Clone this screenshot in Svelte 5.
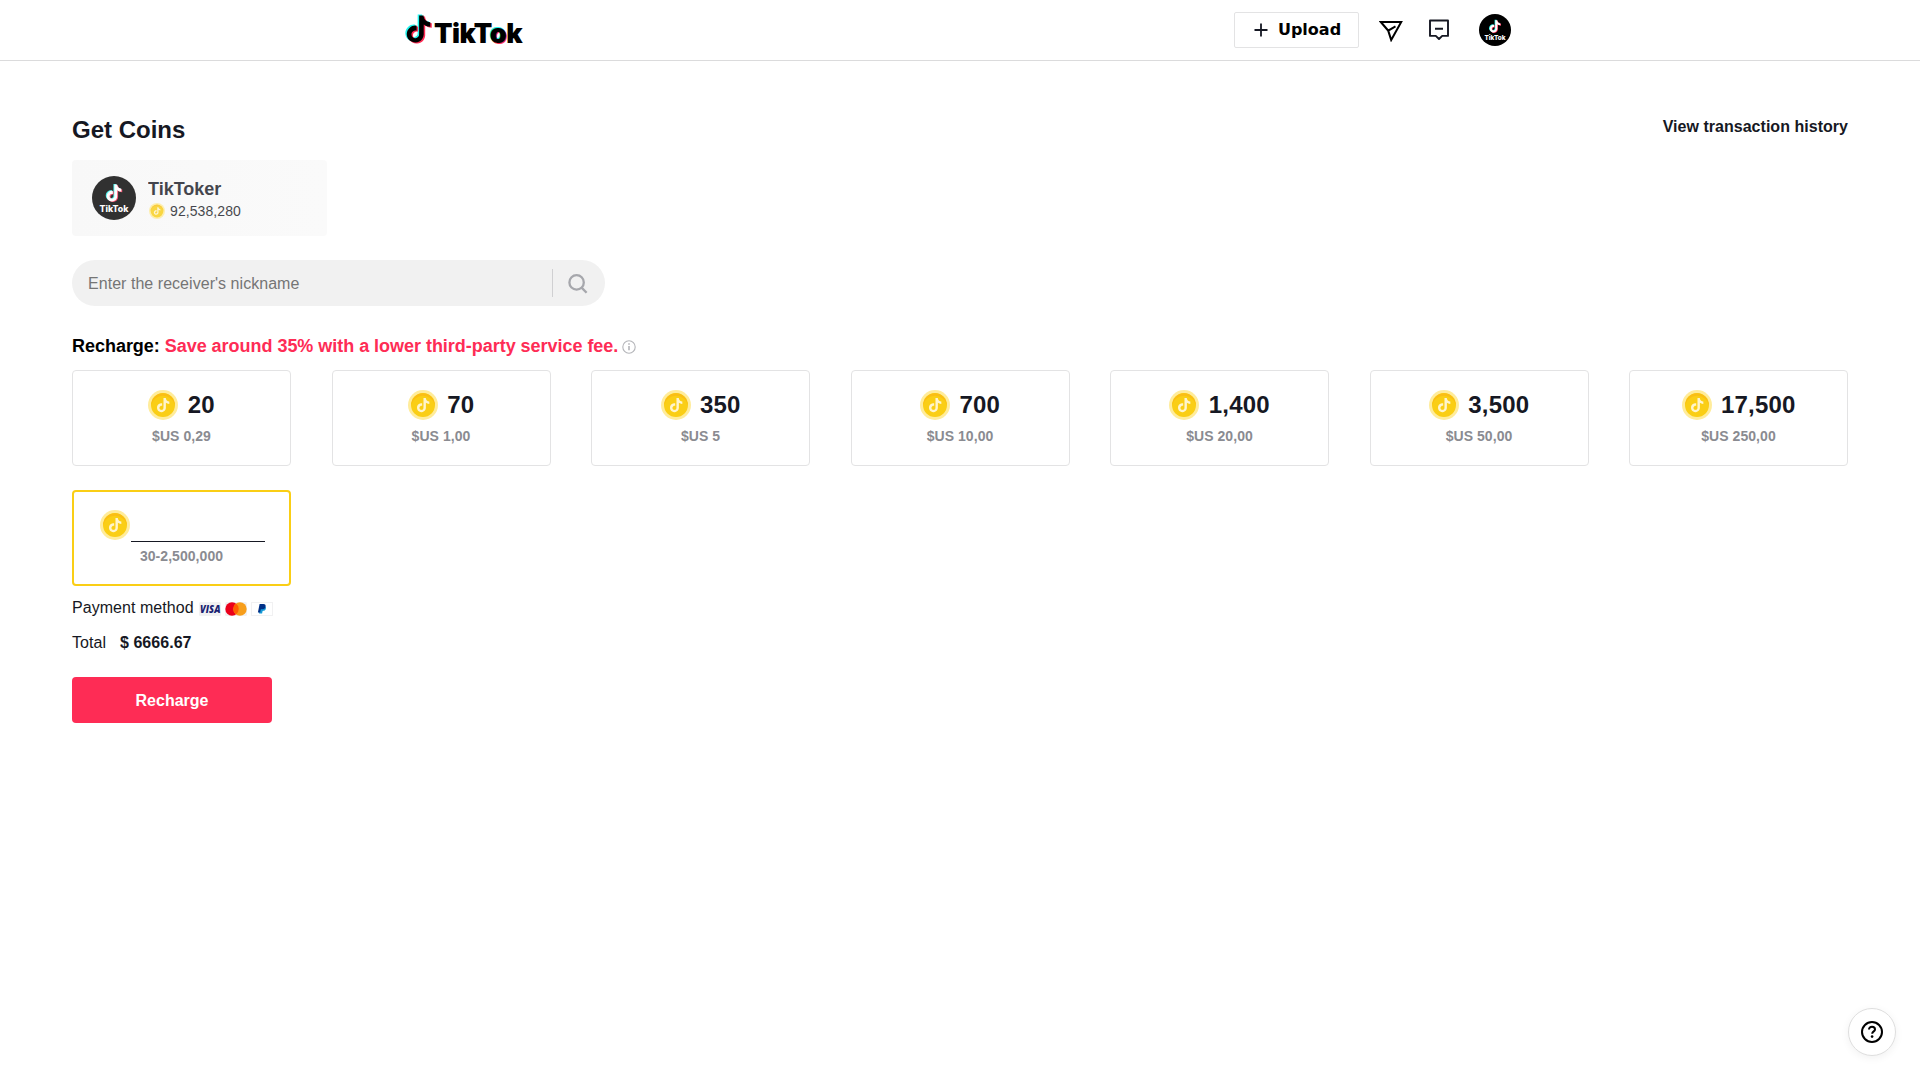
<script lang="ts">
	const notePath =
		'M12.525.02c1.31-.02 2.61-.01 3.91-.02.08 1.53.63 3.09 1.75 4.17 1.12 1.11 2.7 1.62 4.24 1.79v4.03c-1.44-.05-2.89-.35-4.2-.97-.57-.26-1.1-.59-1.62-.93-.01 2.92.01 5.84-.02 8.75-.08 1.4-.54 2.79-1.35 3.94-1.31 1.92-3.58 3.17-5.91 3.21-1.43.08-2.86-.31-4.08-1.03-2.02-1.19-3.44-3.37-3.65-5.71-.02-.5-.03-1-.01-1.49.18-1.9 1.12-3.72 2.58-4.96 1.66-1.44 3.98-2.13 6.15-1.72.02 1.48-.04 2.96-.04 4.44-.99-.32-2.15-.23-3.02.37-.63.41-1.11 1.04-1.36 1.75-.21.51-.15 1.07-.14 1.61.24 1.64 1.82 3.02 3.5 2.87 1.12-.01 2.19-.66 2.77-1.61.19-.33.4-.67.41-1.06.1-1.79.06-3.57.07-5.36.01-4.03-.01-8.05.02-12.07z';

	const packages = [
		{ coins: '20', price: '$US 0,29' },
		{ coins: '70', price: '$US 1,00' },
		{ coins: '350', price: '$US 5' },
		{ coins: '700', price: '$US 10,00' },
		{ coins: '1,400', price: '$US 20,00' },
		{ coins: '3,500', price: '$US 50,00' },
		{ coins: '17,500', price: '$US 250,00' }
	];

	let nickname = $state('');
	let custom = $state('');
</script>

{#snippet note(color: string)}
	<path d={notePath} transform="translate(-1.3 -0.9)" fill="#25f4ee" />
	<path d={notePath} transform="translate(1.3 0.9)" fill="#fe2c55" />
	<path d={notePath} fill={color} />
{/snippet}

{#snippet coin(size: number)}
	<svg class="coin" width={size} height={size} viewBox="0 0 30 30">
		<circle cx="15" cy="15" r="15" fill="#ffec9b" />
		<circle cx="15" cy="15" r="12" fill="#face15" />
		<path d="M3.3 15a11.7 11.7 0 0 1 23.4 0a11.8 10.6 0 0 0-23.4 0z" fill="#fabe15" />
		<path d={notePath} transform="translate(8.1 8) scale(0.59)" fill="#fff5cd" />
	</svg>
{/snippet}

{#snippet avatar(size: number)}
	<svg class="avatar" width={size} height={size} viewBox="0 0 44 44">
		<circle cx="22" cy="22" r="22" fill="#000" />
		<g transform="translate(13.6 8.6) scale(0.7)">
			{@render note('#fff')}
		</g>
		<text x="22" y="36" text-anchor="middle" textLength="29" lengthAdjust="spacingAndGlyphs">TikTok</text>
	</svg>
{/snippet}

<header>
	<div class="logo">
		<svg width="27" height="30" viewBox="0 -1.3 23.9 26.6">
			{@render note('#000')}
		</svg>
		<span class="wordmark">TikT<span class="glow">o</span>k</span>
	</div>
	<nav>
		<button class="upload">
			<svg width="14" height="14" viewBox="0 0 14 14" fill="none" stroke="#161823" stroke-width="1.8">
				<path d="M7 0.5v13M0.5 7h13" />
			</svg>
			Upload
		</button>
		<svg class="send" width="24" height="22" viewBox="0 0 24 22" fill="none" stroke="#000" stroke-width="2" stroke-linejoin="miter">
			<path d="M1.8 2h20.4L12.2 20L9.2 10.6zM1.8 2L9.2 10.6L16.5 6.4" />
		</svg>
		<svg class="inbox" width="20" height="22" viewBox="0 0 20 22" fill="none" stroke="#161823" stroke-width="1.9" stroke-linejoin="round">
			<path d="M1 1.5h18v15.4h-5.8L10 20l-3.2-3.1H1zM6 9.7h8" />
		</svg>
		{@render avatar(32)}
	</nav>
</header>

<main>
	<div class="title-row">
		<h1>Get Coins</h1>
		<a href="#history">View transaction history</a>
	</div>

	<div class="profile">
		{@render avatar(44)}
		<div class="profile-info">
			<div class="name">TikToker</div>
			<div class="balance">{@render coin(16)} 92,538,280</div>
		</div>
	</div>

	<div class="search">
		<input type="text" placeholder="Enter the receiver's nickname" bind:value={nickname} />
		<svg width="20" height="20" viewBox="0 0 20 20" fill="none" stroke="#a6a7ac" stroke-width="2.3">
			<circle cx="8.6" cy="8.4" r="7.2" />
			<path d="M13.6 13.6L18.6 18.8" />
		</svg>
	</div>

	<div class="recharge-title">
		<span>Recharge: <strong>Save around 35% with a lower third-party service fee.</strong></span>
		<svg width="14" height="14" viewBox="0 0 14 14" fill="none" stroke="#b4b5b9">
			<circle cx="7" cy="7" r="6.2" stroke-width="1.1" />
			<path d="M7 3.3v1.5M7 6v4.2" stroke-width="1.6" />
		</svg>
	</div>

	<div class="packages">
		{#each packages as item}
			<div class="package">
				<div class="amount">{@render coin(30)}<span>{item.coins}</span></div>
				<div class="price">{item.price}</div>
			</div>
		{/each}
		<div class="package selected">
			<div class="amount custom">{@render coin(30)}<input type="text" aria-label="Custom" bind:value={custom} /></div>
			<div class="price">30-2,500,000</div>
		</div>
	</div>

	<div class="payment">
		<span>Payment method</span>
		<div class="methods">
			<svg width="22" height="14" viewBox="0 0 22 14">
				<rect width="22" height="14" rx="1.5" fill="#f1f1f2" />
				<text class="visa" x="1" y="10.6" textLength="20.5" lengthAdjust="spacingAndGlyphs">VISA</text>
			</svg>
			<svg width="22" height="14" viewBox="0 0 22 14">
				<rect width="22" height="14" rx="1.5" fill="#f1f1f2" />
				<circle cx="7" cy="7" r="6.7" fill="#eb001b" />
				<circle cx="15" cy="7" r="6.7" fill="#f79e1b" />
				<path d="M11 1.6a6.7 6.7 0 0 1 0 10.8a6.7 6.7 0 0 1 0-10.8z" fill="#ff5f00" />
			</svg>
			<svg width="22" height="14" viewBox="0 0 22 14">
				<rect x="0.5" y="0.5" width="21" height="13" fill="#fff" stroke="#f1f1f2" />
				<path d="M9.3 4.2h4.2c1.8.4 1.8 2.3.9 3.6c-.6.9-1.6 1.1-2.8 1.1l-.5 2.5H8z" fill="#179bd7" />
				<path d="M8.6 2h3.8c1.9 0 2.6 1.2 2.1 2.9c-.5 1.8-1.8 2.4-3.6 2.4H9.8L9.1 10.6H6.9z" fill="#003087" />
			</svg>
		</div>
	</div>

	<div class="total"><span>Total</span><b>$ 6666.67</b></div>

	<button class="recharge">Recharge</button>
</main>

<button class="help" aria-label="Help">
	<svg width="24" height="24" viewBox="0 0 24 24" fill="none" stroke="#000" stroke-width="2">
		<circle cx="12" cy="12" r="10" />
		<path d="M9 9.6c0-1.8 1.3-2.9 3-2.9s3 1.1 3 2.7c0 2-2.8 2-2.8 4.4" />
		<circle cx="12.1" cy="16.6" r="1.3" fill="#000" stroke="none" />
	</svg>
</button>

<style>
	:global(body) {
		background: #fff;
		color: #161823;
		font-family: Arial, 'Liberation Sans', sans-serif;
	}

	svg {
		display: block;
		flex-shrink: 0;
	}

	button {
		cursor: pointer;
		font-family: inherit;
	}

	header {
		height: 60px;
		padding: 0 409px 0 405px;
		display: flex;
		align-items: center;
		justify-content: space-between;
		border-bottom: 1px solid #dbdbdc;
	}

	.logo {
		display: flex;
		align-items: center;
		gap: 2px;
		margin-top: -2px;
	}

	.wordmark {
		font-family: Inter, sans-serif;
		font-size: 27px;
		font-weight: 900;
		line-height: 30px;
		letter-spacing: -0.5px;
		color: #000;
		margin-top: 8px;
		margin-bottom: -2px;
	}

	.glow {
		text-shadow:
			-1px -1px 0 #25f4ee,
			1px 1px 0 #fe2c55;
	}

	nav {
		display: flex;
		align-items: center;
	}

	.upload {
		width: 125px;
		height: 36px;
		padding: 0 0 1px 2px;
		display: flex;
		align-items: center;
		justify-content: center;
		gap: 10px;
		background: #fff;
		border: 1px solid #e3e3e4;
		border-radius: 2px;
		color: #000;
		font-family: 'DejaVu Sans', sans-serif;
		font-size: 16px;
		font-weight: bold;
	}

	.send {
		margin-left: 20px;
		margin-top: 1px;
	}

	.inbox {
		margin-left: 26px;
		margin-right: 30px;
	}

	.avatar text {
		font-family: Inter, sans-serif;
		font-size: 9px;
		font-weight: 800;
		fill: #fff;
	}

	main {
		padding: 53px 72px 0;
	}

	.title-row {
		display: flex;
		justify-content: space-between;
		align-items: flex-start;
		height: 46px;
	}

	h1 {
		margin: 0;
		padding-top: 2px;
		font-size: 24px;
		line-height: 28px;
	}

	.title-row a {
		color: inherit;
		font-size: 16px;
		font-weight: bold;
		line-height: 24px;
		letter-spacing: 0.03px;
		margin-top: 1px;
		text-decoration: none;
	}

	.profile {
		width: 255px;
		height: 76px;
		box-sizing: border-box;
		padding: 16px 20px;
		display: flex;
		gap: 12px;
		background: linear-gradient(90deg, #f8f8f8, #fafafa);
		border-radius: 4px;
	}

	.profile .avatar {
		opacity: 0.8;
	}

	.profile-info {
		opacity: 0.8;
	}

	.name {
		font-size: 18px;
		font-weight: bold;
		line-height: 22px;
		margin-top: 2px;
	}

	.balance {
		display: flex;
		align-items: center;
		gap: 5px;
		margin-left: 1px;
		font-size: 14px;
		line-height: 22px;
		letter-spacing: 0.09px;
	}

	.search {
		width: 533px;
		height: 46px;
		margin-top: 24px;
		display: flex;
		align-items: center;
		background: #f1f1f1;
		border-radius: 23px;
	}

	.search input {
		width: 481px;
		height: 28px;
		box-sizing: border-box;
		padding: 2px 0 0 16px;
		border: none;
		border-right: 1px solid #d0d0d2;
		outline: none;
		background: transparent;
		font: 16px Arial, 'Liberation Sans', sans-serif;
		letter-spacing: 0.04px;
	}

	.search input::placeholder {
		color: #757575;
	}

	.search svg {
		margin-left: 15px;
		margin-top: 1px;
	}

	.recharge-title {
		display: flex;
		align-items: center;
		gap: 4px;
		height: 22px;
		margin-top: 29px;
		color: #000;
		font-size: 18px;
		font-weight: bold;
		letter-spacing: -0.03px;
	}

	.recharge-title strong {
		color: #fe2c55;
	}

	.recharge-title svg {
		margin-top: 2px;
	}

	.packages {
		display: grid;
		grid-template-columns: repeat(7, 219px);
		justify-content: space-between;
		row-gap: 24px;
		margin-top: 13px;
	}

	.package {
		height: 96px;
		box-sizing: border-box;
		padding-top: 19px;
		border: 1px solid #e3e3e4;
		border-radius: 4px;
		text-align: center;
	}

	.package.selected {
		padding-top: 18px;
		border: 2px solid #face15;
	}

	.amount {
		display: flex;
		align-items: center;
		justify-content: center;
		gap: 9.5px;
		height: 30px;
		font-size: 24px;
		font-weight: bold;
		letter-spacing: 0.15px;
	}

	.amount.custom {
		gap: 1px;
		padding-left: 2px;
	}

	.custom input {
		width: 134px;
		height: 34px;
		box-sizing: border-box;
		padding: 0;
		border: none;
		border-bottom: 1px solid #161823;
		outline: none;
		background: transparent;
	}

	.price {
		margin-top: 7px;
		color: #8a8b91;
		font-size: 14px;
		font-weight: bold;
		line-height: 18px;
		letter-spacing: 0.06px;
	}

	.payment {
		display: flex;
		align-items: center;
		gap: 5px;
		height: 20px;
		margin-top: 12px;
		font-size: 16px;
		letter-spacing: 0.05px;
	}

	.methods {
		display: flex;
		gap: 4px;
		margin-top: 2px;
	}

	.visa {
		font-family: 'Open Sans', sans-serif;
		font-size: 10px;
		font-weight: 800;
		font-style: italic;
		fill: #1a1f71;
	}

	.total {
		display: flex;
		align-items: center;
		gap: 14px;
		height: 20px;
		margin-top: 15px;
		font-size: 16px;
		letter-spacing: 0.04px;
	}

	.recharge {
		width: 200px;
		height: 46px;
		margin-top: 24px;
		padding: 2px 0 0;
		background: #fe2c55;
		border: none;
		border-radius: 4px;
		color: #fff;
		font-size: 16px;
		font-weight: bold;
	}

	.help {
		position: fixed;
		right: 24px;
		bottom: 24px;
		width: 48px;
		height: 48px;
		padding: 0;
		display: flex;
		align-items: center;
		justify-content: center;
		background: #fff;
		border: 1px solid #dedede;
		border-radius: 50%;
		box-shadow: 0 2px 8px rgba(0, 0, 0, 0.06);
	}
</style>
